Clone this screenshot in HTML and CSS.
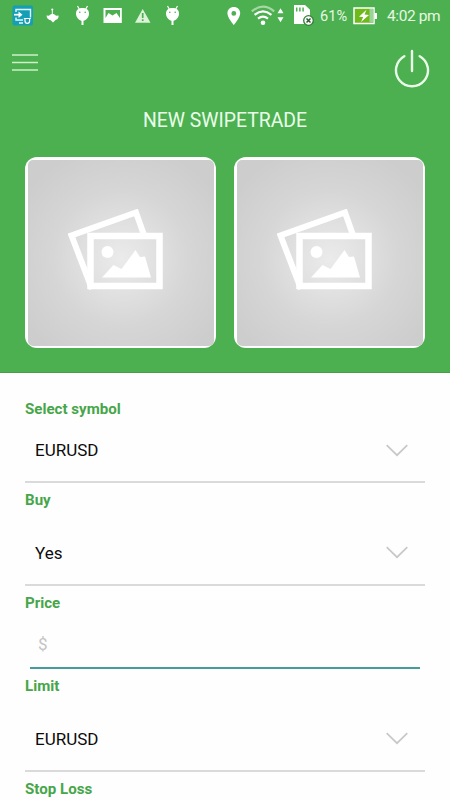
FILE: index.html
```
<!DOCTYPE html>
<html lang="en">
<head>
<meta charset="utf-8">
<title>New SwipeTrade</title>
<link rel="stylesheet" href="styles.css">
</head>
<body>
<svg width="0" height="0" class="defs">
  <defs>
    <symbol id="android" viewBox="0 0 30 32">
      <path d="M9.500 6l2 3.500M19.500 6l-2 3.500" stroke="#fff" stroke-width="1.200"/>
      <path d="M8 13.500c0-3.800 3-5.500 6.500-5.500s6.500 1.700 6.500 5.500-3 7.300-6.500 7.300S8 17.300 8 13.500z" fill="#fff"/>
      <path d="M14.500 20v5" stroke="#fff" stroke-width="2"/>
      <circle cx="11.800" cy="12.300" r=".8" fill="#4caf50"/><circle cx="17.200" cy="12.300" r=".8" fill="#4caf50"/>
    </symbol>
    <symbol id="photos" viewBox="0 0 100 86">
      <path d="M25 79L4.500 25.500 69 2.500 77 25" fill="none" stroke="#fff" stroke-width="6" transform="translate(-1 1)"/>
      <path d="M22.500 27h69v50h-69z" fill="none" stroke="#fff" stroke-width="6.500"/>
      <circle cx="39.500" cy="43" r="6" fill="#fff"/>
      <path d="M34 68.500l11.500-12.500 8 4 14-19 4.500 7 5-.500 6 21z" fill="#fff"/>
    </symbol>
    <symbol id="chevron" viewBox="0 0 22 13">
      <path d="M.7 1.200L11 11.200 21.300 1.200" fill="none" stroke="#c8c8c8" stroke-width="1.700"/>
    </symbol>
  </defs>
</svg>
<header class="header">
  <div class="status">
    <div class="notifications">
      <svg viewBox="0 0 30 32"><rect x="4.500" y="5.500" width="20.500" height="20" rx="2" fill="#159fb5"/><path d="M8 12V9.500h14.500v8M8 17.500V20h7M11 23h4" fill="none" stroke="#e4fbff" stroke-width="1.400"/><path d="M6 14.700h6" stroke="#fff" stroke-width="1.700"/><path d="M10.500 11.500l4 3.200-4 3.200z" fill="#fff"/><path d="M17 18.500v2.500a2.300 2.300 0 0 0 4.600 0v-2.500M15.800 18.500h7" fill="none" stroke="#fff" stroke-width="1.200"/></svg>
      <svg viewBox="0 0 30 32"><path d="M14.300 9v6" stroke="#fff" stroke-width="1"/><circle cx="14.300" cy="9.500" r="1" fill="#fff"/><path d="M8.500 15.500l2.500.2c1.500-2.200 5.500-2.200 7 0l2.500-.2c.5 2.800-1.500 4.200-3 4.500L15 22.500l-2.200-2.300c-2.600-.2-4-1.900-4.300-4.700z" fill="#fff"/></svg>
      <svg viewBox="0 0 30 32"><use href="#android"/></svg>
      <svg viewBox="0 0 30 32"><path fill="#fff" fill-rule="evenodd" d="M5.500 8h18.300v15H5.500zM7.500 10v8l3-5 4 2.500 4-2.500 3.500 5v-8z"/></svg>
      <svg viewBox="0 0 30 32"><path d="M14.700 9L22.500 22.700H7z" fill="#dcf3d7"/><path d="M14.700 13v5M14.700 19.200v1.800" stroke="#4caf50" stroke-width="1.700"/></svg>
      <svg viewBox="0 0 30 32"><use href="#android"/></svg>
    </div>
    <svg class="signals" viewBox="220 0 96 32">
      <path fill="#fff" fill-rule="evenodd" d="M233.800 7c3.700 0 6.400 2.700 6.400 6.200 0 4.500-6.400 11.800-6.400 11.800s-6.400-7.300-6.400-11.800c0-3.500 2.700-6.200 6.400-6.200zm0 4a2.400 2.400 0 1 0 0 4.800 2.400 2.400 0 0 0 0-4.800z"/>
      <g fill="none" stroke="#fff" stroke-width="2.200"><path d="M251.800 11.400q11.200-9.400 22.400 0" stroke="#a5d8a3"/><path d="M254.600 14.800q8.400-6.800 16.800 0"/><path d="M258 18.600q5-4 10 0"/></g>
      <circle cx="263" cy="22.800" r="2.300" fill="#fff"/>
      <path d="M277.500 13.200l3-5 3 5zM277.500 17.300l3 5 3-5z" fill="#fff"/>
      <path d="M294 5h11l5 4.700V24h-16z" fill="#fff"/>
      <path d="M296.700 7.500v4M299.900 7.500v4M303.100 7.500v4" stroke="#4caf50" stroke-width="1.500"/>
      <circle cx="308.500" cy="20.500" r="4.800" fill="#fff" stroke="#337b38" stroke-width="1.300"/>
      <path d="M306.500 18.500l4 4m0-4l-4 4" stroke="#265f2b" stroke-width="1.500"/>
    </svg>
    <span class="percent">61%</span>
    <svg class="battery" viewBox="0 0 26 20"><path d="M1 2h20v15.500H1z" fill="#70b91c" stroke="#fff" stroke-width="1.500"/><path d="M16.500 3h4v13.500h-4z" fill="#9bd49b"/><path d="M21.500 7H24v6h-2.500z" fill="#fff"/><path d="M13.500 3.800L6 10.700l4.200.3-2.200 5 8-7-4.500-.500z" fill="#fff"/></svg>
    <span class="clock">4:02 pm</span>
  </div>
  <div class="toolbar">
    <svg class="menu" viewBox="0 0 26 20"><path d="M0 2h26M0 9.500h26M0 17h26" stroke="#cdf0c8" stroke-width="1.600"/></svg>
    <svg class="power" viewBox="0 0 36 40"><path d="M10.300 7.200a16 16 0 1 0 15.400 0M18 2v20" fill="none" stroke="#eaffea" stroke-width="2.400" stroke-linecap="round"/></svg>
  </div>
  <h1 class="title">NEW SWIPETRADE</h1>
  <div class="pictures">
    <div class="picture"><div class="placeholder"><svg viewBox="0 0 100 86"><use href="#photos"/></svg></div></div>
    <div class="picture"><div class="placeholder"><svg viewBox="0 0 100 86"><use href="#photos"/></svg></div></div>
  </div>
</header>
<main class="form">
  <section class="field first">
    <div class="label">Select symbol</div>
    <div class="select"><span>EURUSD</span><svg viewBox="0 0 22 13"><use href="#chevron"/></svg></div>
  </section>
  <section class="field">
    <div class="label">Buy</div>
    <div class="select"><span>Yes</span><svg viewBox="0 0 22 13"><use href="#chevron"/></svg></div>
  </section>
  <section class="field">
    <div class="label">Price</div>
    <div class="input">$</div>
  </section>
  <section class="field">
    <div class="label">Limit</div>
    <div class="select"><span>EURUSD</span><svg viewBox="0 0 22 13"><use href="#chevron"/></svg></div>
  </section>
  <section class="field">
    <div class="label">Stop Loss</div>
  </section>
</main>
</body>
</html>
```
FILE: styles.css
```
* { box-sizing: border-box; }
body {
  margin: 0;
  height: 800px;
  overflow: hidden;
  background: #fefefe;
  font-family: Roboto, sans-serif;
}
svg { display: block; flex: none; }
.defs { position: absolute; }
.header {
  height: 373px;
  background: #4caf50;
  border-bottom: 1px solid #479f4a;
}
.status {
  display: flex;
  align-items: center;
  height: 32px;
  padding-left: 8px;
  color: #e6f8e2;
}
.notifications { display: flex; }
.notifications svg { width: 30px; height: 32px; }
.signals { width: 96px; height: 32px; margin-left: 32px; }
.percent { width: 32px; margin-left: 4px; font-size: 14.600px; }
.battery { width: 26px; height: 20px; margin-left: 1px; }
.clock {
  margin-left: 8px;
  font-size: 15.500px;
  letter-spacing: -.4px;
  white-space: nowrap;
}
.toolbar {
  display: flex;
  justify-content: space-between;
  height: 68px;
  padding: 17px 20px 0 12px;
}
.menu { width: 26px; height: 20px; margin-top: 4px; }
.power { width: 36px; height: 40px; }
.title {
  margin: 0;
  height: 40px;
  line-height: 41px;
  text-align: center;
  font-size: 19.400px;
  font-weight: 400;
  color: #eaffea;
}
.pictures {
  display: flex;
  gap: 18px;
  padding: 17px 25px 0;
}
.picture {
  flex: 1;
  height: 191px;
  padding: 2.500px;
  border-radius: 12px;
  background: #fff;
}
.placeholder {
  height: 100%;
  padding: 49.500px 0 0 40.500px;
  border-radius: 5px;
  background: radial-gradient(circle at 50% 53%, #ebebeb 0, #e1e1e1 25%, #d6d6d6 50%, #cdcdcd 85%);
}
.placeholder svg { width: 100px; height: 86px; }
.form { padding: 26px 25px 0; }
.field { margin-bottom: 7px; }
.label {
  height: 20px;
  line-height: 21px;
  font-size: 15.100px;
  font-weight: 700;
  color: #46a649;
}
.select {
  display: flex;
  align-items: center;
  justify-content: space-between;
  height: 65px;
  margin-top: 11px;
  padding: 0 17px 0 10px;
  border-bottom: 2px solid #dadada;
  font-size: 17px;
  color: #0c0c0c;
}
.first .select { height: 64px; margin-top: 0; }
.select svg { width: 22px; height: 13px; }
.input {
  height: 56px;
  margin: 0 5px;
  padding-left: 8px;
  border-bottom: 2px solid #459c9b;
  line-height: 62px;
  font-size: 17px;
  color: #c4c4c4;
}
```
